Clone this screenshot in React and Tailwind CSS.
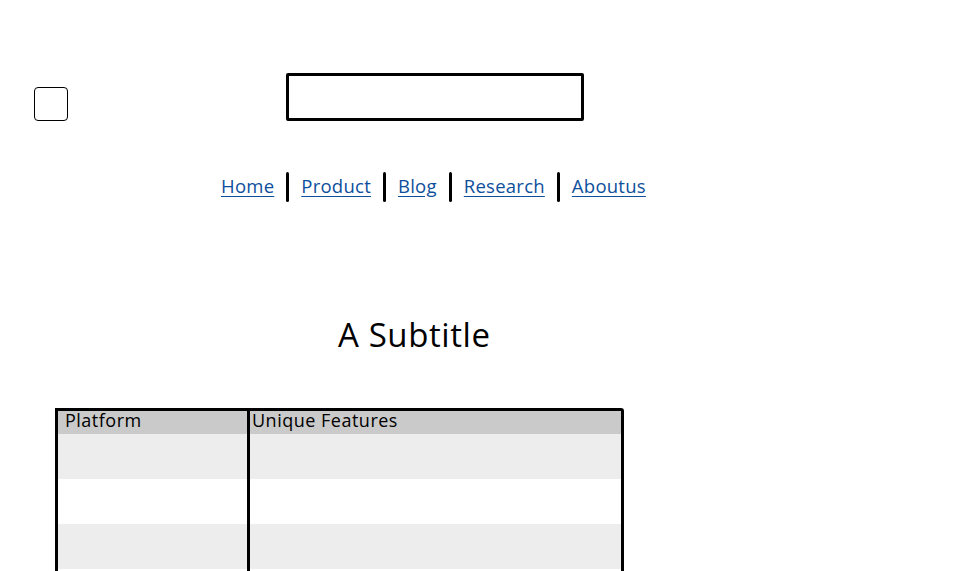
import React from 'react';

const links = ['Home', 'Product', 'Blog', 'Research', 'Aboutus'];

const App = () => {
  return (
    <div className="h-[571px] overflow-hidden bg-white font-['Open_Sans',sans-serif] text-black">
      <div className="pt-[73px]">
        {/* Top row: checkbox + input box */}
        <div className="flex items-start">
          <div className="ml-[34px] mt-[14px] w-[34px] h-[34px] border-[1.5px] border-black rounded-[4px]"></div>
          <div className="ml-[218px] w-[298px] h-[48px] border-[3px] border-black rounded-[2px]"></div>
        </div>

        {/* Nav links */}
        <nav className="mt-[51px] ml-[221px] flex items-center h-[30px]">
          {links.map((l, i) => (
            <React.Fragment key={l}>
              {i > 0 && <span className="mx-[12px] w-[3px] h-[30px] bg-black rounded-full"></span>}
              <a href="#" className="text-[18.5px] leading-none tracking-[0.25px] text-[#0d4f9c] underline underline-offset-[3px] -mt-[2px]">
                {l}
              </a>
            </React.Fragment>
          ))}
        </nav>

        {/* Subtitle */}
        <h2 className="mt-[113px] ml-[338px] text-[33px] leading-[40px] tracking-[0.6px] font-medium">A Subtitle</h2>

        {/* Table */}
        <div className="mt-[53px] ml-[55px] w-[569px] border-[3px] border-black rounded-tr-[3px]">
          <div className="flex bg-[#cacaca] h-[23px] text-[18px] leading-[19px] tracking-[0.5px]">
            <div className="w-[192px] pl-[7px] border-r-[3px] border-black">Platform</div>
            <div className="flex-1 pl-[2px]">Unique Features</div>
          </div>
          {[0, 1, 2, 3].map((r) => (
            <div key={r} className={`flex h-[45px] ${r % 2 === 0 ? 'bg-[#ededed]' : 'bg-white'}`}>
              <div className="w-[192px] border-r-[3px] border-black"></div>
              <div className="flex-1"></div>
            </div>
          ))}
        </div>
      </div>
    </div>
  );
};

export default App;
